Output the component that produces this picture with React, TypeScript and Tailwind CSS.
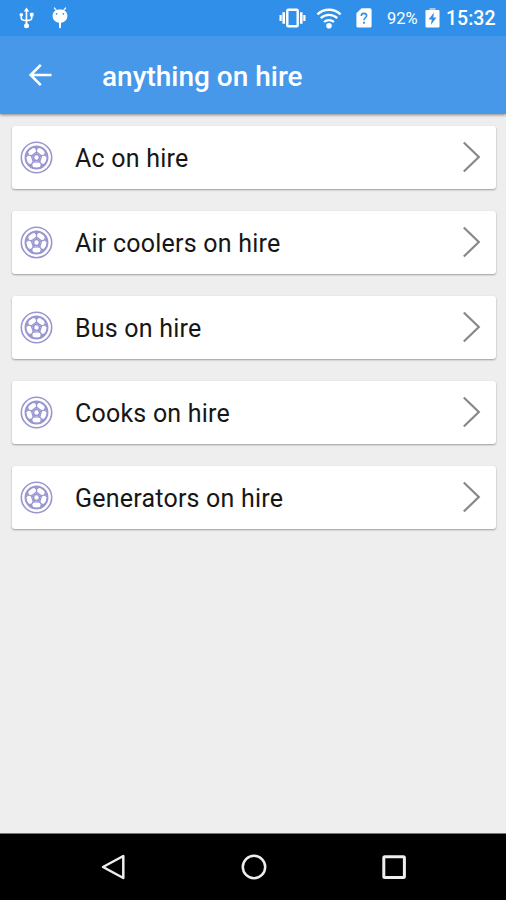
const items = [
  'Ac on hire',
  'Air coolers on hire',
  'Bus on hire',
  'Cooks on hire',
  'Generators on hire',
];

const UsbIcon = () => (
  <svg className="ml-[19px] h-[22px] w-[15px] shrink-0" viewBox="0 0 15 22" fill="none" stroke="#fff" strokeWidth="1.7">
    <path d="M7.5 3v15M2.3 7v4.2q0 1.6 1.6 1.8l3.6.8 3.6-.8q1.6-.2 1.6-1.8V8" />
    <path d="M4.8 4.4 7.5.6l2.7 3.8z" fill="#fff" stroke="none" />
    <circle cx="2.3" cy="7.7" r="1.8" fill="#fff" stroke="none" />
    <path d="M10.9 5.8h3.6v3.6h-3.6z" fill="#fff" stroke="none" />
    <circle cx="7.5" cy="18.8" r="2.5" fill="#fff" stroke="none" />
  </svg>
);

const DebugIcon = () => (
  <svg className="ml-[17px] h-[22px] w-[18px] shrink-0" viewBox="0 0 18 22" fill="none">
    <path d="m3.4 1 2.2 2.700M14.600 1l-2.200 2.700" stroke="#fff" strokeWidth="1.200" strokeLinecap="round" />
    <path d="M9 2.400c4.600 0 7.400 2.400 7.400 6.400 0 4-2.600 6.500-6.400 6.900v4.500a1 1 0 0 1-2 0v-4.500c-3.800-.4-6.400-2.900-6.400-6.900C1.600 4.800 4.400 2.400 9 2.400z" fill="#fff" />
    <circle cx="5.600" cy="6.800" r="0.900" fill="#3090e9" />
    <circle cx="12.400" cy="6.800" r="0.900" fill="#3090e9" />
  </svg>
);

const VibrateIcon = () => (
  <svg className="h-[20px] w-[27px] shrink-0" viewBox="0 0 27 20" fill="none" stroke="#fff">
    <rect x="8.300" y="1.700" width="10.400" height="16.600" rx="1" strokeWidth="2.400" />
    <path d="M4.700 4.200v11.600M22.300 4.200v11.600" strokeWidth="2.600" />
    <path d="M1.600 7v6M25.400 7v6" strokeWidth="2.200" />
  </svg>
);

const WifiIcon = () => (
  <svg className="ml-[10px] h-[21px] w-[26px] shrink-0" viewBox="0 0 26 21" fill="none" stroke="#fff" strokeWidth="2.300">
    <path d="M1.400 6.300a17 17 0 0 1 23.200 0M4.700 10.200a12.200 12.200 0 0 1 16.600 0M8 14a7.400 7.400 0 0 1 10 0" />
    <circle cx="13" cy="17.700" r="2.800" fill="#fff" stroke="none" />
  </svg>
);

const SimIcon = () => (
  <svg className="ml-[14px] h-[20px] w-[16px] shrink-0" viewBox="0 0 16 20" fill="none">
    <path d="M5.500.3H14a1.600 1.600 0 0 1 1.600 1.600V18a1.600 1.600 0 0 1-1.600 1.600H2A1.600 1.600 0 0 1 .4 18V5.300z" fill="#fff" />
    <path d="M5.300 7.900c0-3.500 5.300-3.300 5.300-.2 0 2-2.600 2.200-2.600 4.500" stroke="#3090e9" strokeWidth="1.600" />
    <path d="M7.100 13.800h1.800v1.900H7.100z" fill="#3090e9" />
  </svg>
);

const BatteryIcon = () => (
  <svg className="ml-[6px] h-[20px] w-[15px] shrink-0" viewBox="0 0 15 20">
    <path d="M4.500 0h6v2h-6z" fill="#9acbf6" />
    <path d="M1.500 2h12q1 0 1 1v15.600q0 1-1 1h-12q-1 0-1-1V3q0-1 1-1z" fill="#fff" />
    <path d="M9 4.500 3.500 11.600h3.300l-1 5.500 5.700-7.500H8.300z" fill="#3090e9" />
  </svg>
);

const spokes = [0, 72, 144, 216, 288];

const WheelIcon = () => (
  <svg className="-ml-[0.500px] mb-px h-[33px] w-[33px] shrink-0" viewBox="-16.500 -16.500 33 33" fill="none" stroke="#9996d0">
    <circle r="15.200" strokeWidth="1.600" />
    <circle r="11" strokeWidth="1.900" />
    <circle r="3" strokeWidth="1.600" />
    {spokes.map((angle) => (
      <path
        key={angle}
        transform={`rotate(${angle})`}
        d="M0-3V-10.500M-2.400-10.400 0-8.300 2.400-10.400M-2.600-3.400 0-5.600 2.600-3.400"
        strokeWidth="1.300"
        strokeLinejoin="round"
      />
    ))}
  </svg>
);

export default function App() {
  return (
    <div className="flex h-[900px] w-[506px] flex-col overflow-hidden bg-[#eeeeee] font-[Roboto,sans-serif]">
      <div className="z-20 flex h-9 shrink-0 items-center justify-between bg-[#3090e9] text-white">
        <div className="flex items-center">
          <UsbIcon />
          <DebugIcon />
        </div>
        <div className="flex items-center pr-[10px]">
          <VibrateIcon />
          <WifiIcon />
          <SimIcon />
          <span className="ml-[15px] w-[32px] whitespace-nowrap pt-px text-[16.500px] leading-5">92%</span>
          <BatteryIcon />
          <span className="ml-[6px] w-[50px] whitespace-nowrap pt-0.5 text-[19.500px] font-medium leading-5">15:32</span>
        </div>
      </div>

      <header className="z-10 flex h-[78px] shrink-0 items-center bg-[#4798e8] text-white shadow-[0_1px_3px_rgba(0,0,0,0.45)]">
        <svg className="ml-[28px] h-[24px] w-[24px]" viewBox="0 0 24 24" fill="none" stroke="#fff" strokeWidth="2.600">
          <path d="M23.500 12H3M12.800 1.800 2.600 12l10.200 10.200" />
        </svg>
        <h1 className="ml-[50px] whitespace-nowrap pt-[3px] text-[28px] font-medium leading-8">anything on hire</h1>
      </header>

      <main className="flex grow flex-col gap-[22px] pl-3 pr-[10px] pt-3">
        {items.map((item) => (
          <div
            key={item}
            className="flex h-[63px] shrink-0 items-center rounded-[3px] bg-white pl-2 pr-[15px] shadow-[0_1px_2px_rgba(0,0,0,0.35)]"
          >
            <WheelIcon />
            <span className="ml-[22.500px] grow whitespace-nowrap pt-[3px] text-[25px] leading-8 tracking-[0.220px] text-[#161616]">{item}</span>
            <svg className="mb-0.5 h-[32px] w-[19px] shrink-0" viewBox="0 0 19 32" fill="none" stroke="#888" strokeWidth="2.200">
              <path d="M1.800 1.500 16.800 16l-15 14.500" />
            </svg>
          </div>
        ))}
      </main>

      <nav className="flex h-[67px] shrink-0 items-center justify-between border-t border-[#777] bg-black pl-[100px] pr-[99px]">
        <svg className="h-[28px] w-[26px]" viewBox="0 0 26 28" fill="none" stroke="#eee" strokeWidth="2.500">
          <path d="M23.300 3v22L3 14z" strokeLinejoin="round" />
        </svg>
        <svg className="h-[26px] w-[26px]" viewBox="0 0 26 26" fill="none" stroke="#eee" strokeWidth="2.500">
          <circle cx="13" cy="13" r="11.200" />
        </svg>
        <svg className="h-[26px] w-[26px]" viewBox="0 0 26 26" fill="none" stroke="#eee" strokeWidth="3">
          <rect x="2.800" y="2.800" width="20.600" height="20.600" rx="1" />
        </svg>
      </nav>
    </div>
  );
}
